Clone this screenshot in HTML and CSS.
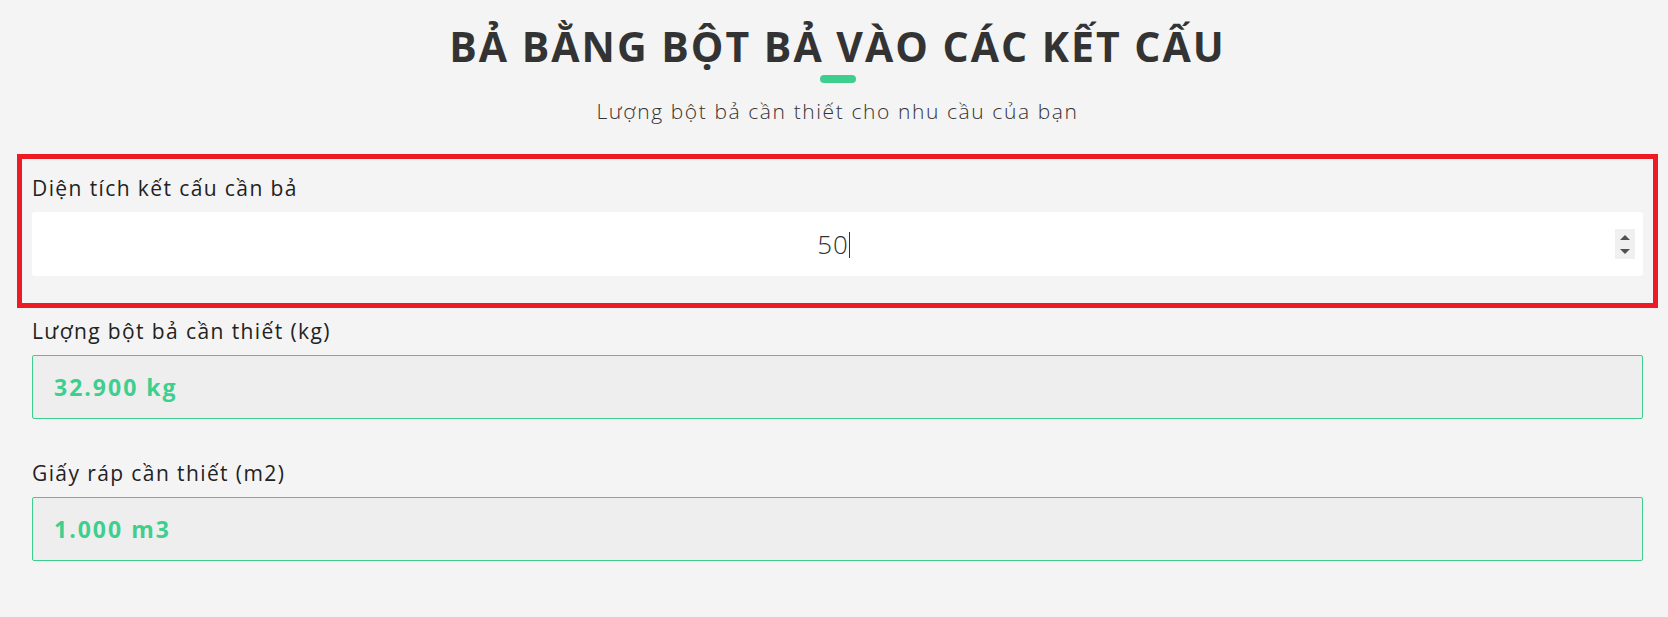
FILE: index.html
```html
<!DOCTYPE html>
<html lang="vi">
<head>
    <meta charset="UTF-8">
    <meta name="viewport" content="width=device-width, initial-scale=1.0">
    <title>Bả bằng bột bả vào các kết cấu</title>
    <link rel="stylesheet" href="styles.css">
</head>
<body>
    <div class="container">
        <h1>BẢ BẰNG BỘT BẢ VÀO CÁC KẾT CẤU</h1>
        <div class="title-bar"></div>
        <p class="subtitle">Lượng bột bả cần thiết cho nhu cầu của bạn</p>

        <div class="form-group active">
            <label class="label">Diện tích kết cấu cần bả</label>
            <div class="field">
                <div class="field-value">50<span class="caret"></span></div>
                <div class="spinner">
                    <svg width="10" height="5" viewBox="0 0 10 5"><path d="M5 0 L10 5 L0 5 Z" fill="#505050"/></svg>
                    <svg width="10" height="5" viewBox="0 0 10 5"><path d="M0 0 L10 0 L5 5 Z" fill="#505050"/></svg>
                </div>
            </div>
        </div>

        <div class="form-group">
            <label class="label">Lượng bột bả cần thiết (kg)</label>
            <div class="result">32.900 kg</div>
        </div>

        <div class="form-group">
            <label class="label">Giấy ráp cần thiết (m2)</label>
            <div class="result">1.000 m3</div>
        </div>
    </div>
</body>
</html>
```

FILE: styles.css
```css
body {
    font-family: 'Open Sans', 'DejaVu Sans', sans-serif;
    background-color: #f4f4f4;
    margin: 0;
    padding: 0;
    color: #222;
}

.container {
    padding: 0 25px 0 32px;
}

h1 {
    margin: 22px 0 0;
    text-align: center;
    font-size: 41px;
    line-height: 49px;
    font-weight: 700;
    letter-spacing: 2px;
    color: #333;
}

.title-bar {
    width: 36px;
    height: 8px;
    margin: 4px auto 0;
    border-radius: 4px;
    background-color: #3ecf8e;
}

.subtitle {
    margin: 16px 0 0;
    text-align: center;
    font-size: 21px;
    line-height: 24px;
    font-weight: 300;
    letter-spacing: 1.6px;
    color: #333;
}

.form-group {
    margin-top: 42px;
}

.form-group.active {
    margin: 31px -15px 0;
    padding: 17px 10px 27px;
    border: 5px solid #ed1c24;
}

.form-group.active + .form-group {
    margin-top: 11px;
}

.label {
    display: block;
    margin-bottom: 12px;
    font-size: 21px;
    line-height: 24px;
    letter-spacing: 1.4px;
    color: #222;
}

.field {
    display: flex;
    align-items: center;
    height: 64px;
    padding: 0 8px 0 20px;
    background-color: #fff;
    border-radius: 3px;
}

.field-value {
    flex: 1;
    text-align: center;
    font-size: 26px;
    font-weight: 300;
    letter-spacing: 1px;
    color: #333;
}

.caret {
    display: inline-block;
    width: 1px;
    height: 26px;
    vertical-align: -4px;
    background-color: #333;
}

.spinner {
    display: flex;
    flex-direction: column;
    align-items: center;
    justify-content: center;
    gap: 9px;
    width: 20px;
    height: 30px;
    background-color: #f0f0f0;
}

.spinner svg {
    display: block;
}

.result {
    display: flex;
    align-items: center;
    box-sizing: border-box;
    height: 64px;
    padding: 0 21px;
    border: 1px solid #3ecf8e;
    border-radius: 2px;
    background-color: #eeeeee;
    font-size: 23px;
    font-weight: 700;
    letter-spacing: 2px;
    color: #3ecf8e;
}
```
